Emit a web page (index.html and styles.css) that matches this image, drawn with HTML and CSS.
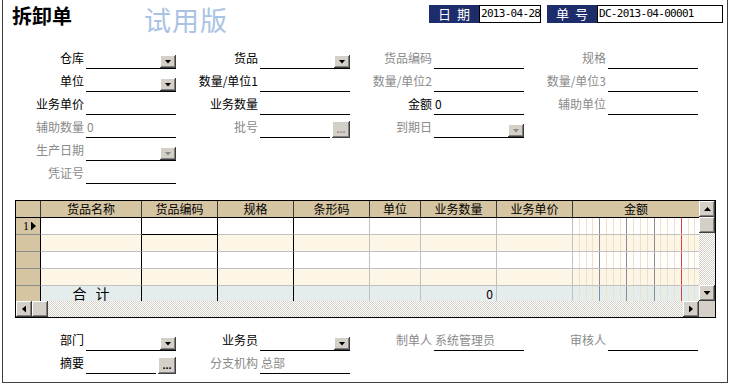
FILE: index.html
```html
<!DOCTYPE html>
<html lang="zh-CN">
<head>
  <meta charset="UTF-8">
  <title>拆卸单</title>
  <link rel="stylesheet" href="styles.css">
</head>
<body>
  <div class="window">
    <div class="head">
      <h1 class="title">拆卸单</h1>
      <span class="trial">试用版</span>
      <div class="docinfo">
        <span class="tag">日 期</span><span class="box date">2013-04-28</span>
        <span class="tag tag-no">单 号</span><span class="box docno">DC-2013-04-00001</span>
      </div>
    </div>

    <div class="fields">
      <div class="field"><span class="lbl">仓库</span><span class="inp"><span class="val"></span><i class="drop"></i></span></div>
      <div class="field"><span class="lbl">货品</span><span class="inp"><span class="val"></span><i class="drop"></i></span></div>
      <div class="field off"><span class="lbl">货品编码</span><span class="inp"><span class="val"></span></span></div>
      <div class="field off"><span class="lbl">规格</span><span class="inp"><span class="val"></span></span></div>

      <div class="field"><span class="lbl">单位</span><span class="inp"><span class="val"></span><i class="drop"></i></span></div>
      <div class="field"><span class="lbl">数量/单位1</span><span class="inp"><span class="val"></span></span></div>
      <div class="field off"><span class="lbl">数量/单位2</span><span class="inp"><span class="val"></span></span></div>
      <div class="field off"><span class="lbl">数量/单位3</span><span class="inp"><span class="val"></span></span></div>

      <div class="field"><span class="lbl">业务单价</span><span class="inp"><span class="val"></span></span></div>
      <div class="field"><span class="lbl">业务数量</span><span class="inp"><span class="val"></span></span></div>
      <div class="field"><span class="lbl">金额</span><span class="inp"><span class="val">0</span></span></div>
      <div class="field off"><span class="lbl">辅助单位</span><span class="inp"><span class="val"></span></span></div>

      <div class="field off"><span class="lbl">辅助数量</span><span class="inp"><span class="val">0</span></span></div>
      <div class="field off"><span class="lbl">批号</span><span class="inp short"><span class="val"></span></span><i class="more">...</i></div>
      <div class="field off"><span class="lbl">到期日</span><span class="inp"><span class="val"></span><i class="drop"></i></span></div>

      <div class="field off newrow"><span class="lbl">生产日期</span><span class="inp"><span class="val"></span><i class="drop"></i></span></div>
      <div class="field off newrow"><span class="lbl">凭证号</span><span class="inp"><span class="val"></span></span></div>
    </div>

    <div class="grid">
      <div class="gbody">
        <div class="row hrow">
          <div class="c"></div>
          <div class="c">货品名称</div>
          <div class="c">货品编码</div>
          <div class="c">规格</div>
          <div class="c">条形码</div>
          <div class="c">单位</div>
          <div class="c">业务数量</div>
          <div class="c">业务单价</div>
          <div class="c">金额</div>
        </div>
        <div class="row">
          <div class="c rh">1<i class="cur"></i></div>
          <div class="c dk"></div><div class="c dk focus"></div><div class="c dk"></div>
          <div class="c"></div><div class="c"></div><div class="c"></div><div class="c"></div>
          <div class="c amt"></div>
        </div>
        <div class="row alt">
          <div class="c rh"></div>
          <div class="c dk"></div><div class="c dk"></div><div class="c dk"></div>
          <div class="c"></div><div class="c"></div><div class="c"></div><div class="c"></div>
          <div class="c amt"></div>
        </div>
        <div class="row">
          <div class="c rh"></div>
          <div class="c dk"></div><div class="c dk"></div><div class="c dk"></div>
          <div class="c"></div><div class="c"></div><div class="c"></div><div class="c"></div>
          <div class="c amt"></div>
        </div>
        <div class="row alt">
          <div class="c rh"></div>
          <div class="c dk"></div><div class="c dk"></div><div class="c dk"></div>
          <div class="c"></div><div class="c"></div><div class="c"></div><div class="c"></div>
          <div class="c amt"></div>
        </div>
        <div class="row total">
          <div class="c rh"></div>
          <div class="c dk sum">合 计</div><div class="c dk"></div><div class="c dk"></div>
          <div class="c"></div><div class="c"></div><div class="c num">0</div><div class="c"></div>
          <div class="c amt"></div>
        </div>
      </div>
      <div class="vscroll">
        <i class="sbtn up"></i><i class="thumb"></i><span class="track"></span><i class="sbtn down"></i>
      </div>
      <div class="hscroll">
        <i class="sbtn left"></i><i class="thumb"></i><span class="track"></span><i class="sbtn right"></i>
      </div>
      <div class="corner"></div>
    </div>

    <div class="fields foot">
      <div class="field"><span class="lbl">部门</span><span class="inp"><span class="val"></span><i class="drop"></i></span></div>
      <div class="field"><span class="lbl">业务员</span><span class="inp"><span class="val"></span><i class="drop"></i></span></div>
      <div class="field off"><span class="lbl">制单人</span><span class="inp"><span class="val">系统管理员</span></span></div>
      <div class="field off"><span class="lbl">审核人</span><span class="inp"><span class="val"></span></span></div>

      <div class="field"><span class="lbl">摘要</span><span class="inp short"><span class="val"></span></span><i class="more">...</i></div>
      <div class="field off"><span class="lbl">分支机构</span><span class="inp"><span class="val">总部</span></span></div>
    </div>
  </div>
</body>
</html>
```

FILE: styles.css
```css
body {
  margin: 0;
  font-family: "Noto Sans CJK SC", sans-serif;
  font-size: 12px;
  color: #000;
  background: #fff;
}

.window {
  width: 726px;
  height: 383px;
  margin-left: 2px;
  border: 1px solid #404040;
  border-top: 0;
  box-sizing: border-box;
}

/* title bar */
.head {
  display: flex;
  align-items: flex-start;
  height: 47px;
  padding: 0 4px 0 9px;
}

.title {
  margin: 6px 0 0;
  font-size: 20px;
  line-height: 20px;
  font-weight: bold;
}

.trial {
  flex: none;
  margin: 0 0 0 72px;
  font-size: 27px;
  line-height: 40px;
  letter-spacing: 1px;
  white-space: nowrap;
  color: #a9c3e4;
}

.docinfo {
  display: flex;
  margin: 5px 0 0 auto;
}

.tag {
  width: 50px;
  height: 18px;
  line-height: 18px;
  background: #1d2c6b;
  color: #fff;
  font-size: 13px;
  text-align: center;
  word-spacing: 3px;
}

.tag-no {
  margin-left: 6px;
}

.box {
  height: 18px;
  box-sizing: border-box;
  border: 1px solid #000;
  padding-left: 1px;
  overflow: hidden;
  white-space: nowrap;
  font-family: "DejaVu Sans Mono", monospace;
  font-size: 11px;
  letter-spacing: -0.7px;
  line-height: 16px;
}

.date {
  width: 62px;
}

.docno {
  width: 126px;
}

/* form fields */
.fields {
  display: grid;
  grid-template-columns: repeat(4, 174px);
  row-gap: 1px;
}

.field {
  display: flex;
  align-items: flex-end;
  height: 22px;
}

.newrow {
  grid-column: 1;
}

.lbl {
  width: 83px;
  height: 22px;
  padding-right: 2px;
  box-sizing: border-box;
  text-align: right;
  line-height: 21px;
  white-space: nowrap;
}

.inp {
  display: flex;
  align-items: flex-end;
  width: 90px;
  height: 22px;
  box-sizing: border-box;
  border-bottom: 1px solid #000;
}

.inp.short {
  width: 70px;
}

.val {
  flex: 1;
  line-height: 21px;
  padding-left: 1px;
  white-space: nowrap;
}

.off .lbl,
.off .val {
  color: #8a8a8a;
}

.drop,
.more,
.sbtn,
.thumb {
  display: flex;
  align-items: center;
  justify-content: center;
  background: #d4d0c8;
  box-shadow: inset -1px -1px #404040, inset 1px 1px #fff, inset -2px -2px #808080;
  flex: none;
}

.drop {
  width: 16px;
  height: 13px;
}

.drop::before,
.sbtn::before {
  content: "";
  width: 7px;
  height: 4px;
  background: #000;
  clip-path: polygon(0 0, 100% 0, 50% 100%);
}

.off .drop::before {
  background: #8a8a8a;
}

.more {
  width: 18px;
  height: 17px;
  margin-left: 2px;
  font-style: normal;
  font-family: "Liberation Sans", sans-serif;
  font-weight: bold;
  font-size: 11px;
  line-height: 11px;
  color: #000;
}

.off .more {
  color: #8a8a8a;
}

/* detail grid */
.grid {
  display: grid;
  grid-template-columns: 683px 16px;
  grid-template-rows: 100px 16px;
  width: max-content;
  margin: 16px 0 0 12px;
  border: 1px solid #000;
}

.row {
  display: grid;
  grid-template-columns: 25px 101px 76px 76px 76px 51px 76px 76px 126px;
  height: 17px;
}

.c {
  box-sizing: border-box;
  border-right: 1px solid #c0c0c0;
  border-bottom: 1px solid #c0c0c0;
  line-height: 16px;
  white-space: nowrap;
}

.c:last-child {
  border-right: 0;
}

.c.dk {
  border-right-color: #000;
}

.c.focus {
  border-bottom-color: #000;
}

.hrow .c {
  background: #d5c5a2;
  border-right-color: #3a3a3a;
  border-bottom-color: #000;
  text-align: center;
}

.alt .c {
  background: #fdf5e6;
}

.row.total {
  height: 15px;
}

.total .c {
  background: #e4ecec;
  border-bottom: 0;
  line-height: 15px;
}

.row .rh {
  display: flex;
  align-items: center;
  justify-content: flex-end;
  padding-right: 4px;
  background: #d5c5a2;
  border-right-color: #000;
  border-bottom-color: #8c8c8c;
  font-family: "Liberation Serif", serif;
  font-size: 12px;
}

.cur {
  width: 5px;
  height: 9px;
  margin-left: 2px;
  background: #000;
  clip-path: polygon(0 0, 100% 50%, 0 100%);
}

.total .sum {
  text-align: center;
  font-size: 14px;
  line-height: 15px;
  word-spacing: 6px;
}

.num {
  text-align: right;
  padding-right: 3px;
}

.row .amt {
  background-image:
    linear-gradient(90deg, transparent 108px, #d94040 108px 109px, transparent 109px),
    repeating-linear-gradient(90deg, transparent 0 26.2px, #8c8c8c 26.2px 27.2px),
    repeating-linear-gradient(90deg, transparent 0 5.8px, #eee2c4 5.8px 6.8px);
}

.vscroll,
.hscroll {
  display: flex;
  background: repeating-conic-gradient(#d4d0c8 0 25%, #fff 0 50%) 0 0 / 2px 2px;
}

.vscroll {
  flex-direction: column;
}

.sbtn,
.thumb {
  width: 16px;
  height: 16px;
}

.track {
  flex: 1;
}

.sbtn.up::before {
  transform: rotate(180deg);
}

.sbtn.left::before {
  width: 4px;
  height: 7px;
  clip-path: polygon(100% 0, 100% 100%, 0 50%);
}

.sbtn.right::before {
  width: 4px;
  height: 7px;
  clip-path: polygon(0 0, 100% 50%, 0 100%);
}

.corner {
  background: #d4d0c8;
}

.foot {
  margin-top: 11px;
}
```
